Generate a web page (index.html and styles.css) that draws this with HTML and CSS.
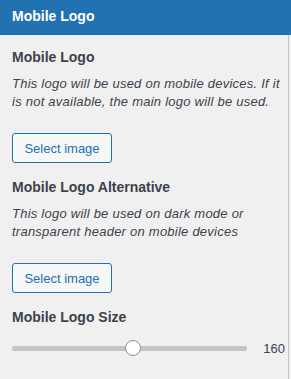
FILE: index.html
```html
<!DOCTYPE html>
<html>
<head>
<meta charset="utf-8">
<link rel="stylesheet" href="styles.css">
</head>
<body>
<div class="panel">
  <div class="header">Mobile Logo</div>
  <div class="content">
    <div class="control">
      <div class="title">Mobile Logo</div>
      <div class="desc">This logo will be used on mobile devices. If it is not available, the main logo will be used.</div>
      <button class="btn">Select image</button>
    </div>
    <div class="control">
      <div class="title">Mobile Logo Alternative</div>
      <div class="desc">This logo will be used on dark mode or transparent header on mobile devices</div>
      <button class="btn">Select image</button>
    </div>
    <div class="control">
      <div class="title">Mobile Logo Size</div>
      <div class="range">
        <div class="track"><div class="thumb" style="left: 51.5%"></div></div>
        <div class="value">160</div>
      </div>
    </div>
  </div>
</div>
</body>
</html>
```
FILE: styles.css
```css
html, body {
  margin: 0;
  padding: 0;
  background: #f0f0f1;
}
body {
  font-family: "Liberation Sans", Arial, sans-serif;
  width: 291px;
  height: 379px;
  overflow: hidden;
}
.panel {
  width: 291px;
  height: 379px;
}
.header {
  background: #2271b1;
  color: #fff;
  font-weight: bold;
  font-size: 14px;
  height: 35px;
  line-height: 33px;
  padding-left: 12px;
}
.content {
  width: 289px;
  height: 344px;
  box-sizing: border-box;
  border-right: 1px solid #c3c4c7;
  padding: 12px 3px 0 12px;
}
.control {
  margin-bottom: 14px;
}
.title {
  font-size: 14px;
  font-weight: bold;
  color: #3c434a;
  line-height: 20px;
}
.desc {
  font-size: 13px;
  font-style: italic;
  color: #3c434a;
  line-height: 18px;
  margin-top: 8px;
  letter-spacing: 0.24px;
}
.btn {
  display: block;
  margin-top: 22px;
  font-family: inherit;
  font-size: 13px;
  color: #2271b1;
  background: #f6f7f7;
  border: 1px solid #2271b1;
  border-radius: 3px;
  height: 30px;
  padding: 0;
  width: 100px;
}
.range {
  display: flex;
  align-items: center;
  margin-top: 11px;
  height: 20px;
}
.track {
  position: relative;
  width: 235px;
  height: 5px;
  border-radius: 3px;
  background: #c3c4c7;
}
.thumb {
  position: absolute;
  top: 50%;
  width: 14px;
  height: 14px;
  border: 1px solid #8c8f94;
  border-radius: 50%;
  background: #fff;
  transform: translate(-50%, -50%);
}
.value {
  margin-left: auto;
  font-size: 13px;
  color: #3c434a;
}
```
